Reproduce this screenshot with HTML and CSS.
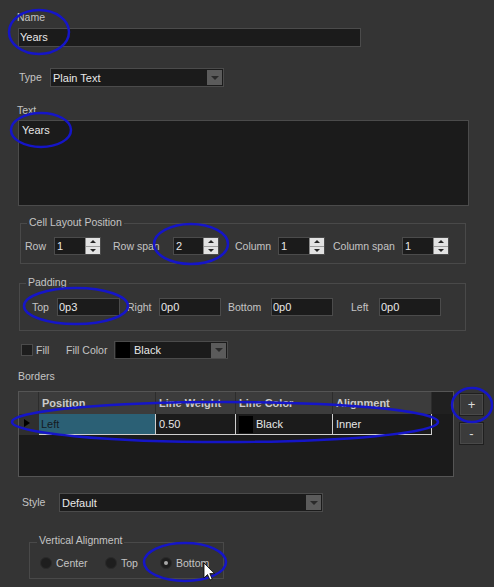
FILE: index.html
```html
<!DOCTYPE html>
<html lang="en">
<head>
    <meta charset="UTF-8">
    <meta name="viewport" content="width=device-width, initial-scale=1.0">
    <title>Cell Properties</title>
    <link rel="stylesheet" href="styles.css">
</head>
<body>
    <div class="panel">
        <div class="label name-label">Name</div>
        <div class="input name-input">Years</div>

        <div class="type-row">
            <span class="label type-label">Type</span>
            <div class="combo type-combo"><span class="combo-text">Plain Text</span><span class="combo-arrow"></span></div>
        </div>

        <div class="label text-label">Text</div>
        <div class="input text-area">Years</div>

        <div class="group cell-group">
            <span class="group-title">Cell Layout Position</span>
            <div class="spin-grid">
                <span class="label">Row</span>
                <div class="spin"><span class="spin-value">1</span><span class="spin-btns"><i class="up"></i><i class="down"></i></span></div>
                <span class="label pl12">Row span</span>
                <div class="spin"><span class="spin-value">2</span><span class="spin-btns"><i class="up"></i><i class="down"></i></span></div>
                <span class="label pl16">Column</span>
                <div class="spin"><span class="spin-value">1</span><span class="spin-btns"><i class="up"></i><i class="down"></i></span></div>
                <span class="label pl8">Column span</span>
                <div class="spin"><span class="spin-value">1</span><span class="spin-btns"><i class="up"></i><i class="down"></i></span></div>
            </div>
        </div>

        <div class="group pad-group">
            <span class="group-title">Padding</span>
            <div class="pad-grid">
                <span class="label">Top</span>
                <div class="input pad-input">0p3</div>
                <span class="label pl7">Right</span>
                <div class="input pad-input">0p0</div>
                <span class="label pl7">Bottom</span>
                <div class="input pad-input">0p0</div>
                <span class="label pl18">Left</span>
                <div class="input pad-input">0p0</div>
            </div>
        </div>

        <div class="fill-row">
            <span class="check"></span>
            <span class="label fill-label">Fill</span>
            <span class="label fill-color-label">Fill Color</span>
            <div class="combo fill-combo"><span class="swatch"></span><span class="combo-text">Black</span><span class="combo-arrow"></span></div>
        </div>

        <div class="label borders-label">Borders</div>
        <div class="borders-row">
            <div class="table">
                <div class="thead">
                    <div class="th"></div>
                    <div class="th">Position</div>
                    <div class="th">Line Weight</div>
                    <div class="th">Line Color</div>
                    <div class="th">Alignment</div>
                    <div class="th filler"></div>
                </div>
                <div class="trow">
                    <div class="row-head"><span class="marker"></span></div>
                    <div class="td selected">Left</div>
                    <div class="td">0.50</div>
                    <div class="td color-cell"><span class="cell-swatch"></span>Black</div>
                    <div class="td">Inner</div>
                    <div class="filler-cell"></div>
                </div>
            </div>
            <div class="btns">
                <div class="btn">+</div>
                <div class="btn">-</div>
            </div>
        </div>

        <div class="style-row">
            <span class="label style-label">Style</span>
            <div class="combo style-combo"><span class="combo-text">Default</span><span class="combo-arrow"></span></div>
        </div>

        <div class="group valign-group">
            <span class="group-title">Vertical Alignment</span>
            <div class="radio-row">
                <span class="radio-item w65"><span class="radio"></span>Center</span>
                <span class="radio-item w55"><span class="radio"></span>Top</span>
                <span class="radio-item"><span class="radio checked"></span>Bottom</span>
            </div>
        </div>
    </div>

    <!-- anotacoes em azul sobre a captura -->
    <svg class="marks" width="494" height="587" viewBox="0 0 494 587">
        <ellipse cx="39" cy="32" rx="30" ry="22"/>
        <ellipse cx="41" cy="130" rx="30" ry="17"/>
        <ellipse cx="191" cy="244" rx="37" ry="20"/>
        <ellipse cx="76" cy="306" rx="52" ry="18"/>
        <ellipse cx="225" cy="422" rx="213" ry="20"/>
        <ellipse cx="472" cy="405" rx="20" ry="17"/>
        <ellipse cx="185" cy="562" rx="41" ry="19"/>
        <path class="cursor" d="M204 563 L204 578 L207.5 574.5 L210 580 L212.2 579 L209.8 573.6 L214.5 573.6 Z"/>
    </svg>
</body>
</html>
```

FILE: styles.css
```css
body {
    margin: 0;
    width: 494px;
    height: 587px;
    overflow: hidden;
    position: relative;
    background-color: #343434;
    font-family: "Liberation Sans", Arial, sans-serif;
    font-size: 10.5px;
    color: #c4c4c4;
}
.panel {
    padding-top: 11px;
}
.label {
    line-height: 13px;
    white-space: nowrap;
}
.input {
    box-sizing: border-box;
    background-color: #1b1b1b;
    border: 1px solid #4b4b4b;
    color: #e8e8e8;
    font-size: 11px;
    padding-left: 1px;
    line-height: 17px;
}
.name-label {
    margin-left: 17px;
}
.name-input {
    margin: 4px 0 0 18px;
    width: 343px;
    height: 19px;
}
.type-row {
    display: flex;
    align-items: center;
    margin-top: 21px;
    padding-left: 19px;
}
.type-label {
    width: 31px;
}
.combo {
    box-sizing: border-box;
    height: 19px;
    border: 1px solid #4b4b4b;
    background-color: #1b1b1b;
    display: flex;
    align-items: center;
    color: #e8e8e8;
    font-size: 11px;
}
.combo-text {
    flex: 1;
    padding-left: 2px;
}
.combo-arrow {
    width: 15px;
    height: 15px;
    margin-right: 1px;
    background-color: #5b5b5b;
    display: flex;
    align-items: center;
    justify-content: center;
}
.combo-arrow::after {
    content: '';
    border-left: 4px solid transparent;
    border-right: 4px solid transparent;
    border-top: 4px solid #2a2a2a;
}
.type-combo {
    width: 174px;
}
.text-label {
    margin: 17px 0 0 17px;
}
.text-area {
    margin: 3px 0 0 18px;
    width: 451px;
    height: 86px;
    padding: 3px 3px;
    line-height: 13px;
}
.group {
    position: relative;
    box-sizing: border-box;
    border: 1px solid #494949;
}
.group-title {
    position: absolute;
    top: -8px;
    left: 6px;
    padding: 0 2px;
    background-color: #343434;
    line-height: 13px;
    white-space: nowrap;
}
.cell-group {
    margin: 17px 0 0 20px;
    width: 446px;
    padding: 13px 0 8px 4px;
}
.spin-grid {
    display: grid;
    grid-template-columns: 29px 47px 72px 46px 59px 47px 77px 47px;
    align-items: center;
    height: 18px;
}
.pl7 { padding-left: 7px; }
.pl8 { padding-left: 8px; }
.pl12 { padding-left: 12px; }
.pl16 { padding-left: 16px; }
.pl18 { padding-left: 18px; }
.spin {
    box-sizing: border-box;
    height: 18px;
    border: 1px solid #4b4b4b;
    background-color: #1b1b1b;
    display: flex;
    color: #e8e8e8;
    font-size: 11px;
}
.spin-value {
    flex: 1;
    padding-left: 2px;
    line-height: 16px;
}
.spin-btns {
    width: 14px;
    display: flex;
    flex-direction: column;
    background-color: #e2e2e2;
    border-left: 1px solid #8a8a8a;
}
.spin-btns i {
    flex: 1;
    display: flex;
    align-items: center;
    justify-content: center;
}
.spin-btns i + i {
    border-top: 1px solid #9c9c9c;
}
.up::after {
    content: '';
    border-left: 3px solid transparent;
    border-right: 3px solid transparent;
    border-bottom: 3px solid #222;
}
.down::after {
    content: '';
    border-left: 3px solid transparent;
    border-right: 3px solid transparent;
    border-top: 3px solid #222;
}
.pad-group {
    margin: 19px 0 0 19px;
    width: 447px;
    padding: 14px 0 14px 12px;
}
.pad-grid {
    display: grid;
    grid-template-columns: 25px 63px 39px 62px 50px 62px 46px 62px;
    align-items: center;
    height: 18px;
}
.pad-input {
    height: 18px;
    line-height: 16px;
}
.fill-row {
    display: flex;
    align-items: center;
    height: 18px;
    margin-top: 10px;
    padding-left: 21px;
}
.check {
    box-sizing: border-box;
    width: 12px;
    height: 12px;
    border: 1px solid #4b4b4b;
    background-color: #1d1d1d;
    margin-right: 3px;
}
.fill-label {
    width: 30px;
}
.fill-color-label {
    width: 48px;
}
.fill-combo {
    width: 114px;
    height: 18px;
}
.swatch {
    width: 14px;
    height: 16px;
    background-color: #000;
    margin: 0 2px 0 1px;
}
.borders-label {
    margin: 11px 0 0 18px;
}
.borders-row {
    display: flex;
    margin: 8px 0 0 18px;
}
.table {
    box-sizing: border-box;
    width: 436px;
    height: 86px;
    border: 1px solid #555;
    background-color: #1b1b1b;
}
.thead,
.trow {
    display: grid;
    grid-template-columns: 20px 117px 80px 97px 99px 21px;
}
.thead {
    height: 22px;
}
.th {
    box-sizing: border-box;
    background-color: #3c3c3c;
    border-right: 1px solid #2c2c2c;
    font-weight: bold;
    padding-left: 3px;
    line-height: 22px;
    color: #cbcbcb;
    font-size: 11px;
    white-space: nowrap;
    overflow: hidden;
}
.th.filler {
    background-color: #202020;
    border-right: none;
}
.trow {
    height: 21px;
}
.row-head {
    background-color: #2f2f2f;
    display: flex;
    align-items: center;
    padding-left: 5px;
}
.marker {
    border-top: 4px solid transparent;
    border-bottom: 4px solid transparent;
    border-left: 6px solid #000;
    margin-top: -4px;
}
.td {
    box-sizing: border-box;
    border-right: 1px solid #cfcfcf;
    border-bottom: 1px solid #cfcfcf;
    padding-left: 3px;
    line-height: 20px;
    color: #e8e8e8;
    font-size: 11px;
}
.td.selected {
    background-color: #2b6075;
    color: #151a22;
    padding-left: 2px;
}
.color-cell {
    display: flex;
    align-items: center;
}
.cell-swatch {
    width: 14px;
    height: 17px;
    background-color: #000;
    margin-right: 3px;
}
.btns {
    display: flex;
    flex-direction: column;
    gap: 6px;
    margin: 2px 0 0 5px;
}
.btn {
    box-sizing: border-box;
    width: 25px;
    height: 23px;
    background-color: #3b3b3b;
    border: 1px solid #1f1f1f;
    box-shadow: inset 0 0 0 1px #494949;
    color: #dcdcdc;
    font-size: 13px;
    display: flex;
    align-items: center;
    justify-content: center;
}
.style-row {
    display: flex;
    align-items: center;
    margin-top: 16px;
    padding-left: 22px;
}
.style-label {
    width: 37px;
}
.style-combo {
    width: 264px;
}
.valign-group {
    margin: 30px 0 0 29px;
    width: 195px;
    height: 37px;
    padding-top: 13px;
}
.valign-group .group-title {
    top: -9px;
    left: 7px;
}
.radio-row {
    display: flex;
    align-items: center;
    height: 13px;
    padding-left: 10px;
}
.radio-item {
    display: flex;
    align-items: center;
    white-space: nowrap;
}
.w65 { width: 65px; }
.w55 { width: 55px; }
.radio {
    box-sizing: border-box;
    width: 12px;
    height: 12px;
    border-radius: 50%;
    background-color: #1e1e1e;
    border: 1px solid #2a2a2a;
    margin-right: 4px;
    display: flex;
    align-items: center;
    justify-content: center;
}
.radio.checked::after {
    content: '';
    width: 4px;
    height: 4px;
    border-radius: 50%;
    background-color: #a8a8a8;
}
.marks {
    position: absolute;
    top: 0;
    left: 0;
    pointer-events: none;
}
.marks ellipse {
    fill: none;
    stroke: #1515c8;
    stroke-width: 2.5;
}
.marks .cursor {
    fill: #fff;
    stroke: #000;
    stroke-width: 0.8;
}
```
